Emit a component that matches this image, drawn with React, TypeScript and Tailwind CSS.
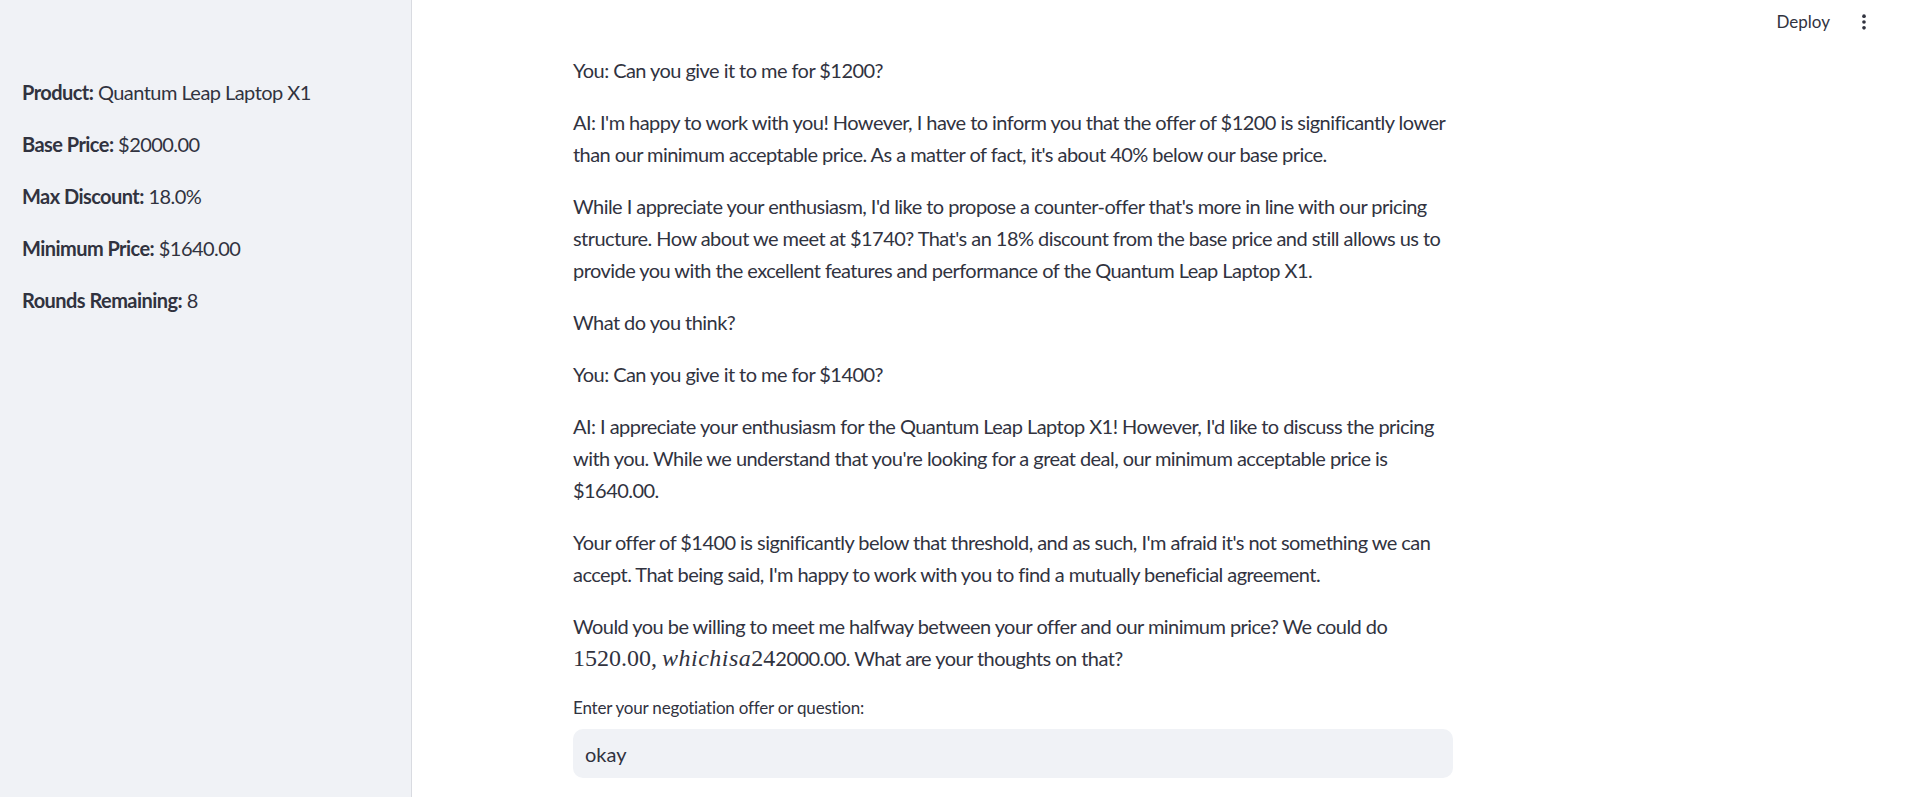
import React from "react";

const font = { fontFamily: "Lato, 'Noto Sans', sans-serif" };

function Stat({ label, value }: { label: string; value: string }) {
  return (
    <p className="text-[20px] leading-[32px] text-[#31333F] mb-[20px] tracking-[-0.55px]">
      <span className="font-bold">{label}</span> {value}
    </p>
  );
}

function P({ children }: { children: React.ReactNode }) {
  return (
    <p className="text-[20px] leading-[32px] text-[#31333F] mb-[20px] whitespace-nowrap tracking-[-0.55px]">
      {children}
    </p>
  );
}

function Dots() {
  return (
    <svg width="20" height="20" viewBox="0 0 24 24" fill="#31333F">
      <circle cx="12" cy="5" r="2.2" />
      <circle cx="12" cy="12" r="2.2" />
      <circle cx="12" cy="19" r="2.2" />
    </svg>
  );
}

export default function App() {
  return (
    <div className="flex h-[797px] w-full overflow-hidden bg-white" style={font}>
      <aside className="w-[412px] shrink-0 bg-[#F0F2F6] border-r border-[#d9dbe1] pt-[76px] px-[22px]">
        <Stat label="Product:" value="Quantum Leap Laptop X1" />
        <Stat label="Base Price:" value="$2000.00" />
        <Stat label="Max Discount:" value="18.0%" />
        <Stat label="Minimum Price:" value="$1640.00" />
        <Stat label="Rounds Remaining:" value="8" />
      </aside>
      <main className="flex-1 flex flex-col">
        <header className="h-[44px] flex items-center justify-end gap-[24px] pr-[34px]">
          <span className="text-[17px] text-[#31333F]">Deploy</span>
          <Dots />
        </header>
        <div className="ml-[161px] w-[880px] pt-[10px]">
          <P>You: Can you give it to me for $1200?</P>
          <P>
            AI: I'm happy to work with you! However, I have to inform you that the offer of $1200 is significantly lower
            <br />
            than our minimum acceptable price. As a matter of fact, it's about 40% below our base price.
          </P>
          <P>
            While I appreciate your enthusiasm, I'd like to propose a counter-offer that's more in line with our pricing
            <br />
            structure. How about we meet at $1740? That's an 18% discount from the base price and still allows us to
            <br />
            provide you with the excellent features and performance of the Quantum Leap Laptop X1.
          </P>
          <P>What do you think?</P>
          <P>You: Can you give it to me for $1400?</P>
          <P>
            AI: I appreciate your enthusiasm for the Quantum Leap Laptop X1! However, I'd like to discuss the pricing
            <br />
            with you. While we understand that you're looking for a great deal, our minimum acceptable price is
            <br />
            $1640.00.
          </P>
          <P>
            Your offer of $1400 is significantly below that threshold, and as such, I'm afraid it's not something we can
            <br />
            accept. That being said, I'm happy to work with you to find a mutually beneficial agreement.
          </P>
          <P>
            Would you be willing to meet me halfway between your offer and our minimum price? We could do
            <br />
            <span className="text-[24px] leading-[24px] tracking-normal" style={{ fontFamily: "'Liberation Serif', serif" }}>
              1520.00,<span className="ml-[5px] italic tracking-[0.5px]">whichisa</span>24
            </span>
            2000.00. What are your thoughts on that?
          </P>
          <label className="block text-[17px] leading-[28px] text-[#31333F] mt-[1px] mb-[7px] tracking-[-0.2px]">
            Enter your negotiation offer or question:
          </label>
          <div className="h-[49px] w-full rounded-[10px] bg-[#F0F2F6] flex items-center px-[12px] text-[20px] text-[#31333F]">
            okay
          </div>
        </div>
      </main>
    </div>
  );
}
